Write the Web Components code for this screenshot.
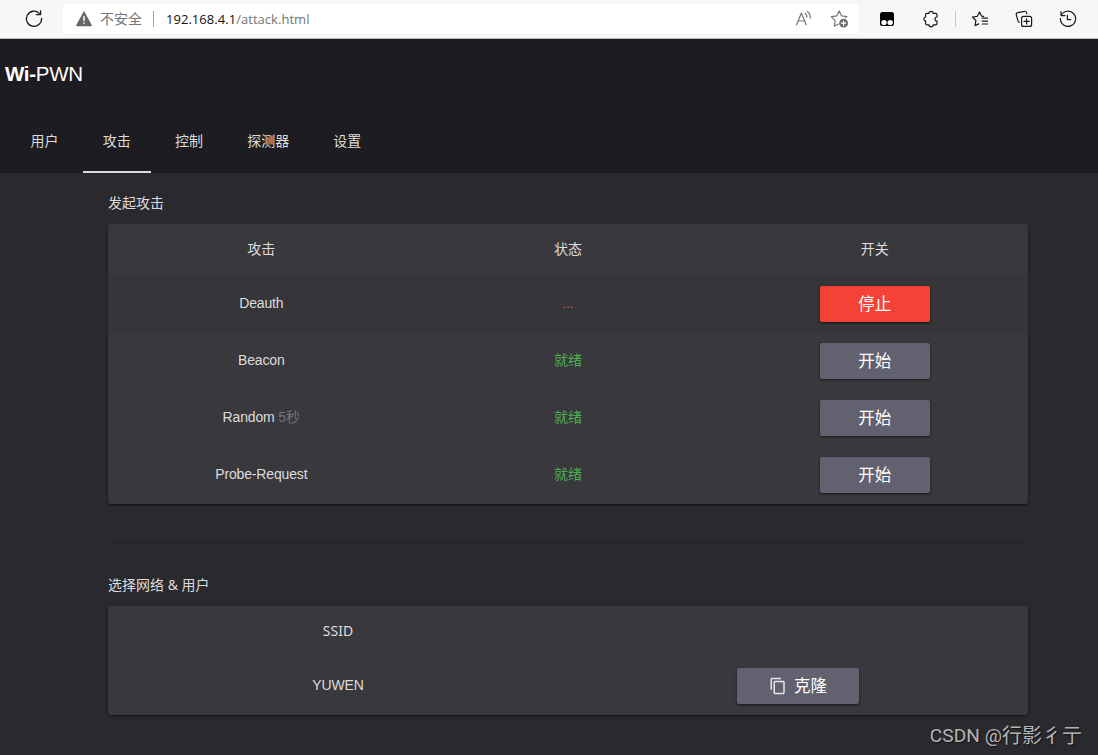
<!DOCTYPE html>
<html lang="zh-CN">
<head>
<meta charset="utf-8">
<title>Wi-PWN</title>
<style>
  html, body {
    margin: 0;
    height: 100%;
    overflow: hidden;
  }

  body {
    --bgcolor: #2a292e;
    --header-color: #1d1c21;
    --card-color: #39383d;
    --card-dark-color: #363539;
    --line-color: #353439;
    --button-color: #626170;
    --red: #f44336;
    --green: #4caf50;
    --text: #dcdcdc;
    --ui-font: "Liberation Sans", "Noto Sans CJK SC", sans-serif;
    --cjk-font: "Noto Sans", "Noto Sans CJK SC", sans-serif;

    background: var(--bgcolor);
    color: var(--text);
    font: 14px/20px var(--ui-font);
  }
</style>
</head>
<body>
<browser-bar host="192.168.4.1" path="/attack.html" notice="不安全"></browser-bar>

<page-header>
  <span slot="brand"><b>Wi-</b>PWN</span>
  <nav-tab>用户</nav-tab>
  <nav-tab active>攻击</nav-tab>
  <nav-tab>控制</nav-tab>
  <nav-tab>探测器</nav-tab>
  <nav-tab>设置</nav-tab>
</page-header>

<page-content>
  <card-section titlebar="发起攻击">
    <table-row head>
      <div>攻击</div><div>状态</div><div>开关</div>
    </table-row>
    <table-row selected>
      <div>Deauth</div><status-text type="running">...</status-text><action-button type="stop">停止</action-button>
    </table-row>
    <table-row>
      <div>Beacon</div><status-text>就绪</status-text><action-button>开始</action-button>
    </table-row>
    <table-row>
      <div>Random <status-text type="muted">5秒</status-text></div><status-text>就绪</status-text><action-button>开始</action-button>
    </table-row>
    <table-row>
      <div>Probe-Request</div><status-text>就绪</status-text><action-button>开始</action-button>
    </table-row>
  </card-section>

  <section-divider></section-divider>

  <card-section titlebar="选择网络 &amp; 用户">
    <table-row head>
      <div>SSID</div><div></div>
    </table-row>
    <table-row>
      <div>YUWEN</div>
      <action-button type="wide">
        <svg slot="icon" width="18" height="18" viewBox="0 0 24 24" fill="#e6e6ea"><path d="M16 1H4c-1.1 0-2 .9-2 2v14h2V3h12V1zm3 4H8c-1.1 0-2 .9-2 2v14c0 1.1.9 2 2 2h11c1.1 0 2-.9 2-2V7c0-1.1-.9-2-2-2zm0 16H8V7h11v14z"/></svg>
        克隆
      </action-button>
    </table-row>
  </card-section>
</page-content>

<water-mark><span slot="site">CSDN @</span>行影彳亍</water-mark>

<script>
class BrowserBar extends HTMLElement {
  constructor() {
    super();
    this.attachShadow({ mode: "open" });
  }

  static get styles() {
    return /* css */`
      :host {
        display: flex;
        align-items: center;
        height: 39px;
        box-sizing: border-box;
        padding-left: 24px;
        padding-right: 20px;
        background: #f7f7f7;
        border-bottom: 1px solid #b9bfc1;
        color: #757575;
        font-family: var(--cjk-font);
      }

      svg {
        display: block;
        flex: none;
        fill: none;
        stroke: #1b1b1b;
        stroke-width: 1.2;
        stroke-linecap: round;
        stroke-linejoin: round;
      }

      .address {
        display: flex;
        align-items: center;
        width: 797px;
        height: 30px;
        box-sizing: border-box;
        margin-left: 18px;
        padding: 0 9px 0 13px;
        background: #fff;
        border-radius: 4px;
        box-shadow: 0 0 2px #0001;
      }

      .notice {
        margin-left: 7px;
        font-size: 14px;
      }

      .separator {
        width: 1px;
        height: 16px;
        margin: 0 12px 0 11px;
        background: #a0a0a0;
      }

      .url {
        font-family: "Open Sans", sans-serif;
        font-size: 13px;
        letter-spacing: 0.04px;
      }

      .url b {
        font-weight: normal;
        color: #111;
      }

      .address .read {
        margin-left: auto;
        margin-right: 16px;
      }

      .address .read,
      .address .star {
        stroke: #767676;
      }

      .tools {
        display: flex;
        align-items: center;
        gap: 26px;
        margin-left: 19px;
      }

      .tools .separator {
        margin: 0 -11px;
        background: #c8c8c8;
      }

      .tools .history {
        margin-left: -1px;
      }
    `;
  }

  connectedCallback() {
    this.render();
  }

  render() {
    this.shadowRoot.innerHTML = /* html */`
    <style>${BrowserBar.styles}</style>
    <svg width="20" height="20" viewBox="0 0 20 20"><path d="M15.2 4.2A7.6 7.6 0 1 0 17.6 9.4M16.6 1.8V5.6H12.4" stroke-width="1.3"/></svg>
    <div class="address">
      <svg width="18" height="18" viewBox="0 0 18 18"><path d="M9 2 16.3 15.6H1.7Z" style="fill:#686868;stroke:#686868"/><path d="M9 6.6V10.6M9 13V13.2" stroke="#fff" style="stroke:#fff;stroke-width:1.5"/></svg>
      <span class="notice">${this.getAttribute("notice")}</span>
      <span class="separator"></span>
      <span class="url"><b>${this.getAttribute("host")}</b>${this.getAttribute("path")}</span>
      <svg class="read" width="20" height="20" viewBox="0 0 20 20"><path d="M2.6 15.8 7.4 4 12.2 15.8M4.2 12H10.6M11.2 4.2Q13 5.8 12.8 8.2M13.4 2.6Q16.6 5 16.2 9"/></svg>
      <svg class="star" width="20" height="20" viewBox="0 0 20 20"><path d="M15.6 8.6 17 7.6 11.6 6.9 9.2 2 6.8 6.9 1.4 7.6 5.2 11.6 4.4 17 8.2 15.2"/><circle cx="13.6" cy="14.2" r="4.4" style="fill:#6b6b6b;stroke:none"/><path d="M11.4 14.2H15.8M13.6 12V16.4" style="stroke:#fff"/></svg>
    </div>
    <div class="tools">
      <svg width="18" height="18" viewBox="0 0 18 18"><rect x="2" y="2" width="14" height="14" rx="2.6" style="fill:#000;stroke:none"/><circle cx="6" cy="12.6" r="2.7" style="fill:#fff;stroke:none"/><circle cx="12.2" cy="12.6" r="2.7" style="fill:#fff;stroke:none"/></svg>
      <svg width="18" height="18" viewBox="0 0 18 18"><path d="M4.8 3.4H7A2.1 2 0 0 1 11.2 3.4H13.6A1.4 1.4 0 0 1 15 4.8V7A2 2 0 0 0 15 11V13.4A1.4 1.4 0 0 1 13.6 14.8H11.2A2.1 2 0 0 1 7 14.8H4.8A1.2 1.2 0 0 1 3.6 13.6V11.2A2.2 2.2 0 0 1 3.6 6.9V4.6A1.2 1.2 0 0 1 4.8 3.4Z"/></svg>
      <span class="separator"></span>
      <svg width="18" height="18" viewBox="0 0 18 18"><path d="M12.6 6.4 10.6 6.1 8.5 1.9 6.3 6.3 1.4 7 4.9 10.5 4.1 15.6 7.6 13.9M11.2 8.2H16.6M11.2 11.1H16.6M11.2 14H16.6"/></svg>
      <svg width="18" height="18" viewBox="0 0 18 18"><rect x="6.6" y="6.4" width="10" height="10" rx="2"/><path d="M11.6 8.8V14M9 11.4H14.2M4.4 12.2A2 2 0 0 1 3 10.8L1.3 4.8A1.8 1.8 0 0 1 2.6 2.6L9.4 1.3A1.8 1.8 0 0 1 11.6 2.7L11.9 3.8"/></svg>
      <svg class="history" width="20" height="20" viewBox="0 0 20 20"><path d="M3 2.6V6.6H7M3.2 6.4A7.6 7.6 0 1 1 2.4 9.6M9.4 6.4V10.6H12.6"/></svg>
    </div>`;
  }
}

class PageHeader extends HTMLElement {
  constructor() {
    super();
    this.attachShadow({ mode: "open" });
  }

  static get styles() {
    return /* css */`
      :host {
        display: flex;
        flex-direction: column;
        height: 134px;
        background: var(--header-color);
      }

      .brand {
        padding: 19px 5px 0;
        font-size: 20.5px;
        letter-spacing: -0.3px;
        line-height: 32px;
        color: #fff;
      }

      nav {
        display: flex;
        gap: 4.2px;
        margin-top: auto;
        padding-left: 10.6px;
      }
    `;
  }

  connectedCallback() {
    this.shadowRoot.innerHTML = /* html */`
    <style>${PageHeader.styles}</style>
    <div class="brand"><slot name="brand"></slot></div>
    <nav><slot></slot></nav>`;
  }
}

class NavTab extends HTMLElement {
  constructor() {
    super();
    this.attachShadow({ mode: "open" });
  }

  static get styles() {
    return /* css */`
      :host {
        display: block;
        height: 64px;
        box-sizing: border-box;
        padding: 0 20px;
        line-height: 65px;
        border-bottom: 2px solid transparent;
      }

      :host([active]) {
        border-bottom-color: #dcdcdc;
      }
    `;
  }

  connectedCallback() {
    this.shadowRoot.innerHTML = /* html */`
    <style>${NavTab.styles}</style>
    <slot></slot>`;
  }
}

class PageContent extends HTMLElement {
  constructor() {
    super();
    this.attachShadow({ mode: "open" });
  }

  connectedCallback() {
    this.shadowRoot.innerHTML = /* html */`
    <style>
      :host {
        display: block;
        width: 920px;
        margin-left: 108px;
        padding-top: 20px;
      }
    </style>
    <slot></slot>`;
  }
}

class CardSection extends HTMLElement {
  constructor() {
    super();
    this.attachShadow({ mode: "open" });
  }

  static get styles() {
    return /* css */`
      :host {
        display: block;
      }

      h2 {
        margin: 0 0 11px;
        font: 14px/20px var(--cjk-font);
      }

      .card {
        background: var(--card-color);
        border-radius: 3px;
        box-shadow: 0 1px 3px #0004, 0 1px 2px #0006;
        overflow: hidden;
      }
    `;
  }

  connectedCallback() {
    this.shadowRoot.innerHTML = /* html */`
    <style>${CardSection.styles}</style>
    <h2></h2>
    <div class="card"><slot></slot></div>`;
    this.shadowRoot.querySelector("h2").textContent = this.getAttribute("titlebar");
  }
}

class TableRow extends HTMLElement {
  constructor() {
    super();
    this.attachShadow({ mode: "open" });
  }

  static get styles() {
    return /* css */`
      :host {
        display: grid;
        grid-auto-flow: column;
        grid-auto-columns: 1fr;
        height: 57px;
        box-sizing: border-box;
        padding-top: 10px;
        border-bottom: 1px solid var(--line-color);
        justify-items: center;
        align-items: start;
        line-height: 35px;
        letter-spacing: -0.15px;
      }

      :host(:last-of-type) {
        border-bottom: 0;
      }

      :host([head]) {
        height: 52px;
        padding-top: 0;
        line-height: 50px;
        letter-spacing: 0;
        font-family: var(--cjk-font);
      }

      :host([selected]) {
        background: var(--card-dark-color);
      }
    `;
  }

  connectedCallback() {
    this.shadowRoot.innerHTML = /* html */`
    <style>${TableRow.styles}</style>
    <slot></slot>`;
  }
}

class StatusText extends HTMLElement {
  constructor() {
    super();
    this.attachShadow({ mode: "open" });
  }

  connectedCallback() {
    this.shadowRoot.innerHTML = /* html */`
    <style>
      :host { display: inline; color: var(--green); letter-spacing: 0; }
      :host([type="running"]) { color: #d0625c; font-size: 13px; }
      :host([type="muted"]) { color: #747378; }
    </style>
    <slot></slot>`;
  }
}

class ActionButton extends HTMLElement {
  constructor() {
    super();
    this.attachShadow({ mode: "open" });
  }

  static get styles() {
    return /* css */`
      :host {
        --width: 110px;
        --color: var(--button-color);

        display: block;
      }

      :host([type="stop"]) {
        --color: var(--red);
      }

      :host([type="wide"]) {
        --width: 122px;
      }

      button {
        display: flex;
        align-items: center;
        justify-content: center;
        gap: 7px;
        width: var(--width);
        height: 36px;
        padding: 0;
        border: 0;
        border-radius: 2px;
        background: var(--color);
        color: #fff;
        font: 16.5px/36px var(--cjk-font);
        box-shadow: 0 1px 3px #0005, 0 1px 2px #0005;
      }

      button:hover {
        cursor: pointer;
        filter: brightness(110%);
      }
    `;
  }

  connectedCallback() {
    this.shadowRoot.innerHTML = /* html */`
    <style>${ActionButton.styles}</style>
    <button><slot name="icon"></slot><span><slot></slot></span></button>`;
  }
}

class SectionDivider extends HTMLElement {
  constructor() {
    super();
    this.attachShadow({ mode: "open" });
  }

  connectedCallback() {
    this.shadowRoot.innerHTML = /* html */`
    <style>
      :host {
        display: block;
        height: 2px;
        margin: 37px 0 32px;
        background: #262529;
      }
    </style>`;
  }
}

class WaterMark extends HTMLElement {
  constructor() {
    super();
    this.attachShadow({ mode: "open" });
  }

  connectedCallback() {
    this.shadowRoot.innerHTML = /* html */`
    <style>
      :host {
        position: absolute;
        right: 16px;
        bottom: 4px;
        display: flex;
        font: 20px/30px var(--cjk-font);
        color: #b4b4b6;
        text-shadow: 1px 1px 1px #0009;
      }

      ::slotted(span) {
        font-family: Roboto, sans-serif;
        font-size: 19.2px;
        white-space: pre;
      }
    </style>
    <slot name="site"></slot><slot></slot>`;
  }
}

customElements.define("browser-bar", BrowserBar);
customElements.define("page-header", PageHeader);
customElements.define("nav-tab", NavTab);
customElements.define("page-content", PageContent);
customElements.define("card-section", CardSection);
customElements.define("table-row", TableRow);
customElements.define("status-text", StatusText);
customElements.define("action-button", ActionButton);
customElements.define("section-divider", SectionDivider);
customElements.define("water-mark", WaterMark);
</script>
</body>
</html>
